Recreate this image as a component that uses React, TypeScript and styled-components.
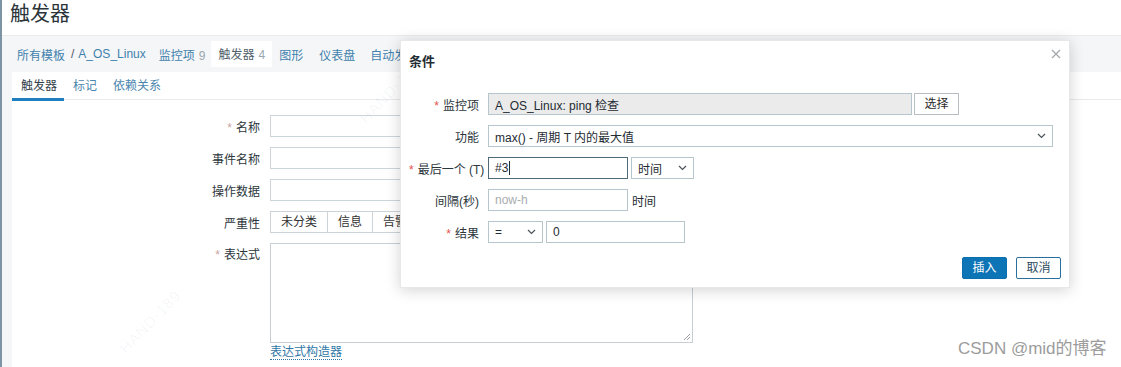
import React from "react";
import styled, { createGlobalStyle } from "styled-components";

const Global = createGlobalStyle`
  html, body { margin: 0; padding: 0; background: #fff; }
  body {
    font-family: "Liberation Sans", Arial, "Noto Sans CJK SC", sans-serif;
    font-size: 12px;
    color: #1f2c33;
  }
  * { box-sizing: border-box; }
`;

const FONT = `"Liberation Sans", Arial, "Noto Sans CJK SC", sans-serif`;

const Screen = styled.div`
  position: relative;
  width: 1121px;
  height: 367px;
  overflow: hidden;
  background: #fff;
  display: flex;
`;

const SideEdge = styled.div`
  width: 2px;
  flex-shrink: 0;
  background: #7c94a3;
`;

const Main = styled.div`
  flex: 1;
  display: flex;
  flex-direction: column;
  min-width: 0;
  background: #f5f6f7;
`;

const Header = styled.header`
  height: 36px;
  flex-shrink: 0;
  background: #fff;
  border-bottom: 1px solid #ececec;
  padding-left: 8px;
  font-size: 20px;
  line-height: 28px;
  color: #2a3439;
`;

const NavStrip = styled.nav`
  height: 36px;
  flex-shrink: 0;
  display: flex;
  align-items: center;
  padding-left: 15px;
`;

const NavLink = styled.span<{ $gap?: number; $active?: boolean }>`
  margin-left: ${(p) => p.$gap ?? 0}px;
  color: ${(p) => (p.$active ? "#50616b" : "#3f82ad")};
  background: ${(p) => (p.$active ? "#fff" : "transparent")};
  padding: ${(p) => (p.$active ? "4px 7px 5px" : "0")};
  white-space: nowrap;
`;

const Count = styled.span`
  color: #9aa7af;
  margin-left: 4px;
`;

const Sep = styled.span`
  color: #556;
  margin: 0 4px 0 6px;
`;

const Panel = styled.section`
  flex: 1;
  margin-left: 10px;
  background: #fff;
  display: flex;
  flex-direction: column;
`;

const TabBar = styled.div`
  height: 28px;
  display: flex;
  border-bottom: 1px solid #e8ebec;
`;

const Tab = styled.div<{ $active?: boolean }>`
  padding: 0 7px 0 9px;
  line-height: 29px;
  color: ${(p) => (p.$active ? "#33414a" : "#4c86ad")};
  border-bottom: 3px solid ${(p) => (p.$active ? "#1f7fbf" : "transparent")};
  height: 29px;
  margin-bottom: -1px;
`;

const Form = styled.div`
  padding-top: 15px;
  display: flex;
  flex-direction: column;
  align-items: flex-start;
  gap: 10px;
`;

const Row = styled.div<{ $top?: boolean }>`
  display: flex;
  align-items: ${(p) => (p.$top ? "flex-start" : "center")};
  gap: 10px;
`;

const Label = styled.label<{ $w: number; $pt?: number }>`
  width: ${(p) => p.$w}px;
  flex-shrink: 0;
  text-align: right;
  color: #2c363b;
  white-space: nowrap;
  padding-top: ${(p) => p.$pt ?? 0}px;
`;

const Star = styled.span<{ $soft?: boolean }>`
  color: ${(p) => (p.$soft ? "#c9a4a2" : "#e2514a")};
  margin-right: 4px;
`;

const BgInput = styled.div<{ $w: number }>`
  width: ${(p) => p.$w}px;
  height: 22px;
  border: 1px solid #cbd6dc;
  background: #fff;
`;

const Segmented = styled.div`
  display: flex;
`;

const SegBtn = styled.div`
  height: 22px;
  padding: 0 10px;
  line-height: 20px;
  border: 1px solid #cdd3d6;
  margin-left: -1px;
  color: #333;
  background: #fff;
  &:first-child { margin-left: 0; }
`;

const TextArea = styled.div`
  width: 423px;
  height: 100px;
  border: 1px solid #c7cfd3;
  position: relative;
`;

const Grip = styled.svg`
  position: absolute;
  right: 1px;
  bottom: 1px;
`;

const BuilderLink = styled.a`
  display: inline-block;
  margin-left: 258px;
  margin-top: -8px;
  color: #2f76a6;
  text-decoration: none;
  border-bottom: 1px dotted #2f76a6;
  line-height: 14px;
`;

/* ---------- modal ---------- */

const Modal = styled.div`
  position: absolute;
  left: 400px;
  top: 40px;
  width: 670px;
  height: 248px;
  background: #fff;
  border: 1px solid #e6e8e9;
  box-shadow: 0 2px 14px rgba(0, 0, 0, 0.18);
  display: flex;
  flex-direction: column;
  font-family: ${FONT};
`;

const ModalHead = styled.div`
  position: relative;
  padding: 12px 9px 0 8px;
  height: 52px;
  font-size: 13px;
  font-weight: bold;
  line-height: 18px;
  color: #1f2c33;
`;

const Close = styled.svg`
  position: absolute;
  right: 8px;
  top: 8px;
`;

const ModalBody = styled.div`
  padding-left: 8px;
  display: flex;
  flex-direction: column;
  gap: 10px;
`;

const MRow = styled.div`
  display: flex;
  align-items: center;
`;

const MField = styled.div<{ $w: number; $bg?: string; $focus?: boolean; $ml?: number; $muted?: boolean }>`
  width: ${(p) => p.$w}px;
  height: 22px;
  margin-left: ${(p) => p.$ml ?? 0}px;
  border: 1px solid ${(p) => (p.$focus ? "#4f6b7a" : "#b7c5cc")};
  background: ${(p) => p.$bg ?? "#fff"};
  padding: 0 6px;
  display: flex;
  align-items: center;
  justify-content: space-between;
  color: ${(p) => (p.$muted ? "#a7adb0" : "#1f2c33")};
  white-space: nowrap;
  overflow: hidden;
`;

const Caret = styled.span`
  display: inline-block;
  width: 1px;
  height: 14px;
  background: #1f2c33;
  vertical-align: middle;
  margin-left: 1px;
`;

const Chevron = () => (
  <svg width="9" height="6" viewBox="0 0 9 6">
    <path d="M1 1 L4.5 4.5 L8 1" fill="none" stroke="#4a5358" strokeWidth="1.2" />
  </svg>
);

const PlainBtn = styled.div`
  width: 45px;
  height: 22px;
  margin-left: 2px;
  border: 1px solid #b5bfc4;
  background: #fff;
  text-align: center;
  line-height: 20px;
  color: #2b2b2b;
`;

const Hint = styled.span`
  margin-left: 4px;
  color: #1f2c33;
`;

const ModalFoot = styled.div`
  margin-top: auto;
  padding: 0 8px 8px 0;
  display: flex;
  justify-content: flex-end;
  gap: 9px;
`;

const FootBtn = styled.div<{ $primary?: boolean }>`
  width: 45px;
  height: 22px;
  text-align: center;
  line-height: 20px;
  border: 1px solid ${(p) => (p.$primary ? "#0a6fae" : "#2a6f9c")};
  background: ${(p) => (p.$primary ? "#0d74b5" : "#fff")};
  color: ${(p) => (p.$primary ? "#fff" : "#2c4a5e")};
  border-radius: 2px;
`;

const Mark = styled.div<{ $x: number; $y: number }>`
  position: absolute;
  left: ${(p) => p.$x}px;
  top: ${(p) => p.$y}px;
  transform: rotate(-46deg);
  transform-origin: left center;
  font-size: 15px;
  letter-spacing: 1px;
  color: rgba(0, 0, 0, 0.045);
  pointer-events: none;
  white-space: nowrap;
`;

const Credit = styled.div`
  position: absolute;
  left: 958px;
  top: 338px;
  font-size: 17px;
  line-height: 22px;
  color: #9c9c9c;
  font-family: "Liberation Sans", Arial, "Noto Sans CJK SC", sans-serif;
  white-space: nowrap;
`;

export default function App() {
  return (
    <>
      <Global />
      <Screen>
        <SideEdge />
        <Main>
          <Header>触发器</Header>
          <NavStrip>
            <NavLink>所有模板</NavLink>
            <Sep>/</Sep>
            <NavLink>A_OS_Linux</NavLink>
            <NavLink $gap={13}>
              监控项<Count>9</Count>
            </NavLink>
            <NavLink $gap={6} $active>
              触发器<Count>4</Count>
            </NavLink>
            <NavLink $gap={7}>图形</NavLink>
            <NavLink $gap={16}>仪表盘</NavLink>
            <NavLink $gap={15}>自动发现</NavLink>
          </NavStrip>
          <Panel>
            <TabBar>
              <Tab $active>触发器</Tab>
              <Tab>标记</Tab>
              <Tab>依赖关系</Tab>
            </TabBar>
            <Form>
              <Row>
                <Label $w={248}>
                  <Star $soft>*</Star>名称
                </Label>
                <BgInput $w={423} />
              </Row>
              <Row>
                <Label $w={248}>事件名称</Label>
                <BgInput $w={423} />
              </Row>
              <Row>
                <Label $w={248}>操作数据</Label>
                <BgInput $w={423} />
              </Row>
              <Row>
                <Label $w={248}>严重性</Label>
                <Segmented>
                  <SegBtn>未分类</SegBtn>
                  <SegBtn>信息</SegBtn>
                  <SegBtn>告警</SegBtn>
                </Segmented>
              </Row>
              <Row $top>
                <Label $w={248} $pt={2}>
                  <Star $soft>*</Star>表达式
                </Label>
                <TextArea>
                  <Grip width="8" height="8" viewBox="0 0 8 8">
                    <path d="M7 1 L1 7 M7 4 L4 7" stroke="#9aa0a3" strokeWidth="1" />
                  </Grip>
                </TextArea>
              </Row>
              <BuilderLink>表达式构造器</BuilderLink>
            </Form>
          </Panel>
        </Main>

        <Mark $x={362} $y={112}>HAND-189</Mark>
        <Mark $x={122} $y={342}>HAND-189</Mark>
        <Mark $x={860} $y={214}>HAND-189</Mark>

        <Modal>
          <ModalHead>
            条件
            <Close width="10" height="10" viewBox="0 0 10 10">
              <path d="M1 1 L9 9 M9 1 L1 9" stroke="#a4a9ab" strokeWidth="1.3" />
            </Close>
          </ModalHead>
          <ModalBody>
            <MRow>
              <Label $w={70}>
                <Star>*</Star>监控项
              </Label>
              <MField $w={424} $ml={9} $bg="#ebebeb">
                A_OS_Linux: ping 检查
              </MField>
              <PlainBtn>选择</PlainBtn>
            </MRow>
            <MRow>
              <Label $w={70}>功能</Label>
              <MField $w={565} $ml={9}>
                <span>max() - 周期 T 内的最大值</span>
                <Chevron />
              </MField>
            </MRow>
            <MRow>
              <Label $w={70}>
                <Star>*</Star>最后一个 (T)
              </Label>
              <MField $w={140} $ml={9} $focus>
                <span>
                  #3<Caret />
                </span>
              </MField>
              <MField $w={63} $ml={3}>
                <span>时间</span>
                <Chevron />
              </MField>
            </MRow>
            <MRow>
              <Label $w={70}>间隔(秒)</Label>
              <MField $w={140} $ml={9} $muted>
                now-h
              </MField>
              <Hint>时间</Hint>
            </MRow>
            <MRow>
              <Label $w={70}>
                <Star>*</Star>结果
              </Label>
              <MField $w={55} $ml={9}>
                <span>=</span>
                <Chevron />
              </MField>
              <MField $w={139} $ml={3}>
                0
              </MField>
            </MRow>
          </ModalBody>
          <ModalFoot>
            <FootBtn $primary>插入</FootBtn>
            <FootBtn>取消</FootBtn>
          </ModalFoot>
        </Modal>

        <Credit>CSDN @mid的博客</Credit>
      </Screen>
    </>
  );
}
